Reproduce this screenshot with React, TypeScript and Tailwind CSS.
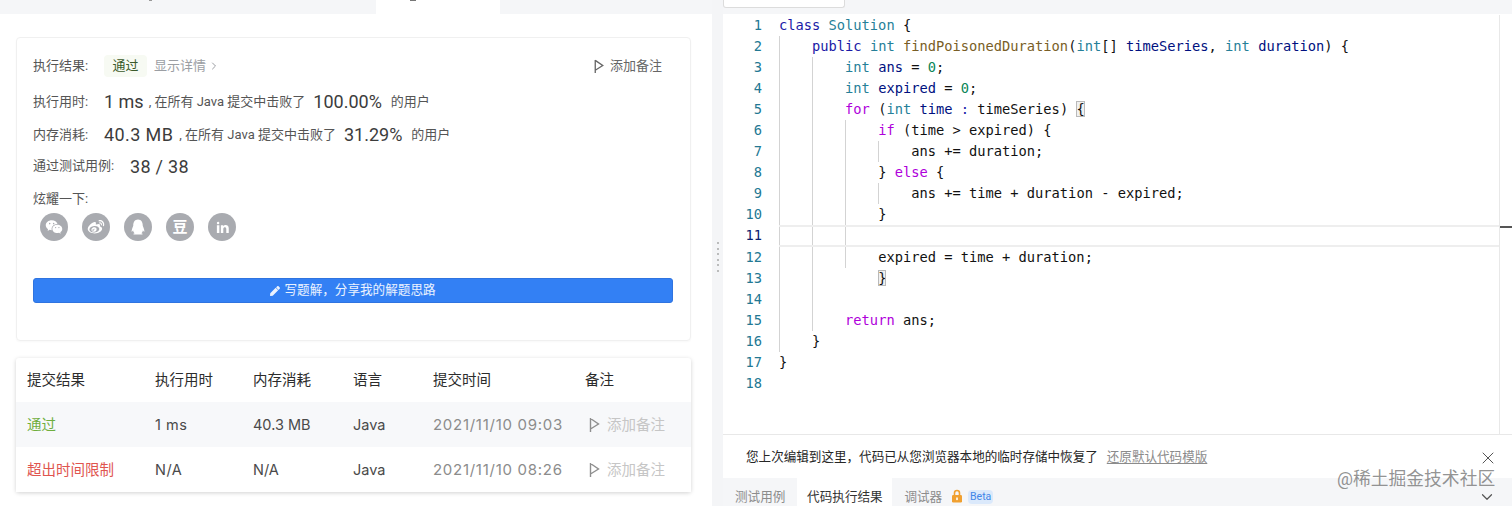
import { RiWechatFill, RiWeiboFill, RiQqFill, RiLinkedinFill } from 'react-icons/ri';
import { FaPen } from 'react-icons/fa';
import { X, ChevronDown, ChevronRight } from 'lucide-react';

const cjk = "font-['Roboto','Noto_Sans_CJK_SC',sans-serif]";

function Flag({ className }: { className: string }) {
    return (
        <svg viewBox="0 0 10 16" className={className} fill="none" stroke="currentColor" strokeWidth="1.4">
            <path d="M1 1v14M1 1.5l8 5.5-8 5" />
        </svg>
    );
}

const kw = 'text-[#1a1aa6]';
const type = 'text-[#267f99]';
const fn = 'text-[#795e26]';
const param = 'text-[#001080]';
const num = 'text-[#098658]';
const ctrl = 'text-[#af00db]';
const txt = 'text-[#111]';

type Tok = [string, string] | [string, string, boolean];

const lines: { depth: number; toks: Tok[] }[] = [
    { depth: 0, toks: [['class ', kw], ['Solution', type], [' {', txt]] },
    { depth: 1, toks: [['public ', kw], ['int ', type], ['findPoisonedDuration', fn], ['(', txt], ['int', type], ['[] ', txt], ['timeSeries', param], [', ', txt], ['int ', type], ['duration', param], [') {', txt]] },
    { depth: 2, toks: [['int ', type], ['ans', param], [' = ', txt], ['0', num], [';', txt]] },
    { depth: 2, toks: [['int ', type], ['expired', param], [' = ', txt], ['0', num], [';', txt]] },
    { depth: 2, toks: [['for', ctrl], [' (', txt], ['int ', type], ['time', param], [' : ', kw], ['timeSeries) ', txt], ['{', txt, true]] },
    { depth: 3, toks: [['if', ctrl], [' (time > expired) {', txt]] },
    { depth: 4, toks: [['ans += duration;', txt]] },
    { depth: 3, toks: [['} ', txt], ['else', ctrl], [' {', txt]] },
    { depth: 4, toks: [['ans += time + duration - expired;', txt]] },
    { depth: 3, toks: [['}', txt]] },
    { depth: 3, toks: [] },
    { depth: 3, toks: [['expired = time + duration;', txt]] },
    { depth: 2, toks: [['    ', txt], ['}', txt, true]] },
    { depth: 2, toks: [] },
    { depth: 2, toks: [['return', ctrl], [' ans;', txt]] },
    { depth: 1, toks: [['}', txt]] },
    { depth: 0, toks: [['}', txt]] },
    { depth: 0, toks: [] },
];

function CodeLine({ n, depth, toks }: { n: number; depth: number; toks: Tok[] }) {
    const current = n === 11;
    return (
        <div className="flex h-[21.06px] leading-[21.06px]">
            <div className={`w-[39px] shrink-0 text-right ${current ? 'text-[#0b216f]' : 'text-[#237893]'}`}>{n}</div>
            <div className={`ml-[17px] flex flex-1 whitespace-pre ${current ? 'border-y-2 border-[#eeeeee]' : ''}`}>
                {Array.from({ length: depth }).map((_, i) => (
                    <span key={i} className="w-[33.05px] shrink-0 border-l border-[#d3d3d3]" />
                ))}
                <span>
                    {toks.map((t, i) => (
                        <span key={i} className={`${t[1]} ${t[2] ? 'bg-[#f0f0f0] outline outline-1 -outline-offset-1 outline-[#b9b9b9]' : ''}`}>{t[0]}</span>
                    ))}
                </span>
            </div>
        </div>
    );
}

function ShareIcon({ children }: { children: React.ReactNode }) {
    return (
        <span className="flex h-[28px] w-[28px] items-center justify-center rounded-full bg-[#a9abb0] text-[18px] text-white">
            {children}
        </span>
    );
}

function StatLine({ label, value, pct, valueClass }: { label: string; value: string; pct: string; valueClass: string }) {
    return (
        <div className="flex items-center text-[13px] text-[#555]">
            <span className="w-[71px]">{label}</span>
            <span className={`text-[18px] text-[#3c3c3c] ${valueClass}`}>{value}</span>
            <span className="ml-[6px]">, 在所有 Java 提交中击败了</span>
            <span className="ml-[8px] text-[18px] text-[#3c3c3c]">{pct}</span>
            <span className="ml-[9px]">的用户</span>
        </div>
    );
}

const rows = [
    { status: '通过', color: 'text-[#6fae3d]', time: '1 ms', mem: '40.3 MB', at: '2021/11/10 09:03', bg: 'bg-[#f7f8fa]' },
    { status: '超出时间限制', color: 'text-[#e0554f]', time: 'N/A', mem: 'N/A', at: '2021/11/10 08:26', bg: 'bg-white' },
];

export default function App() {
    return (
        <div className={`flex h-[506px] w-[1512px] overflow-hidden bg-[#f4f5f7] ${cjk}`}>
            {/* left: submission result */}
            <div className="flex w-[712px] shrink-0 flex-col">
                <div className="relative flex h-[14px] shrink-0 justify-start bg-[#f5f6f8]">
                    <div className="ml-[376px] h-full w-[124px] bg-white" />
                    {/* bottoms of the tab icons that are cut off by the crop */}
                    <span className="absolute left-[149px] top-0 h-[1px] w-[3px] bg-[#999]" />
                    <span className="absolute left-[410px] top-0 h-[1px] w-[6px] bg-[#777]" />
                </div>
                <div className="flex-1 bg-white px-[16px] pt-[23px]">
                    <div className="flex h-[304px] w-[675px] flex-col rounded-[4px] border border-[#f0f0f0] px-[16px] shadow-[0_1px_2px_rgba(0,0,0,0.03)]">
                        <div className="mt-[17px] flex h-[22px] items-center text-[13px] text-[#555]">
                            <span className="w-[71px]">执行结果:</span>
                            <span className="flex h-[22px] w-[43px] items-center justify-center rounded-[4px] bg-[#f7faf3] text-[#3b5a2a]">通过</span>
                            <span className="ml-[7px] flex items-center text-[#9b9ea3]">显示详情<ChevronRight size={12} className="ml-[2px]" /></span>
                            <span className="ml-auto mr-[12px] flex items-center gap-[6px] text-[#666]">
                                <Flag className="h-[15px] w-[10px]" />添加备注
                            </span>
                        </div>
                        <div className="mt-[11px] h-[22px]"><StatLine label="执行用时:" value="1 ms" pct="100.00%" valueClass="-mr-[1px]" /></div>
                        <div className="mt-[11px] h-[22px]"><StatLine label="内存消耗:" value="40.3 MB" pct="31.29%" valueClass="tracking-[0.4px]" /></div>
                        <div className="mt-[12px] flex h-[22px] items-center text-[13px] text-[#555]">
                            <span className="w-[97px]">通过测试用例:</span>
                            <span className="whitespace-pre text-[18px] tracking-[0.3px] text-[#3c3c3c]">38 / 38</span>
                        </div>
                        <div className="mt-[13px] h-[18px] text-[13px] leading-[18px] text-[#555]">炫耀一下:</div>
                        <div className="ml-[7px] mt-[5px] flex gap-[14px]">
                            <ShareIcon><RiWechatFill /></ShareIcon>
                            <ShareIcon><RiWeiboFill /></ShareIcon>
                            <ShareIcon><RiQqFill /></ShareIcon>
                            <ShareIcon><span className="text-[15px] font-bold leading-none">豆</span></ShareIcon>
                            <ShareIcon><RiLinkedinFill className="text-[15px]" /></ShareIcon>
                        </div>
                        <button className="mt-[37px] flex h-[25px] w-[640px] items-center justify-center gap-[4px] rounded-[3px] border border-[#2f74e0] bg-[#3380f4] text-[12.6px] text-white/90">
                            <FaPen className="text-[10px]" />写题解，分享我的解题思路
                        </button>
                    </div>
                    <div className="mt-[17px] w-[675px] rounded-[3px] bg-white font-['Inter','Noto_Sans_CJK_SC',sans-serif] shadow-[0_1px_4px_rgba(0,0,0,0.18)]">
                        <div className="flex h-[44px] items-center pb-[1px] text-[14.5px] text-[#2c2c2c]">
                            <span className="w-[139px] pl-[11px]">提交结果</span>
                            <span className="w-[98px]">执行用时</span>
                            <span className="w-[100px]">内存消耗</span>
                            <span className="w-[80px]">语言</span>
                            <span className="w-[152px]">提交时间</span>
                            <span>备注</span>
                        </div>
                        {rows.map((r) => (
                            <div key={r.at} className={`flex h-[45px] items-center pt-[1px] text-[14.5px] text-[#4a4a4a] ${r.bg}`}>
                                <span className={`w-[139px] pl-[11px] ${r.color}`}>{r.status}</span>
                                <span className="w-[98px] tracking-[0.5px]">{r.time}</span>
                                <span className="w-[100px]">{r.mem}</span>
                                <span className="w-[80px]">Java</span>
                                <span className="w-[156px] text-[15px] tracking-[0.72px] text-[#8c8c8c]">{r.at}</span>
                                <span className="flex items-center gap-[7px] text-[#c6c6c6]">
                                    <Flag className="h-[16px] w-[11px] text-[#8f8f8f]" />添加备注
                                </span>
                            </div>
                        ))}
                    </div>
                </div>
            </div>

            {/* splitter */}
            <div className="flex w-[11px] shrink-0 flex-col items-center justify-center gap-[3.5px] bg-[#f4f5f7] pt-[8px]">
                {[0, 1, 2, 3, 4, 5].map((i) => (
                    <span key={i} className="h-[2px] w-[2px] rounded-full bg-[#a8a8a8]" />
                ))}
            </div>

            {/* right: editor */}
            <div className="flex min-w-0 flex-1 flex-col">
                <div className="h-[14px] shrink-0 bg-[#f5f6f8]">
                    <div className="h-[8px] w-[122px] rounded-b-[3px] border border-t-0 border-[#dcdcdc] bg-white" />
                </div>
                <div className="relative h-[421px] shrink-0 border-b border-[#e8e8e8] bg-white pt-[1px] font-['DejaVu_Sans_Mono',monospace] text-[13.72px]">
                    <div className="mr-[12px] h-full border-r border-[#e8e8e8]">
                        {lines.map((l, i) => (
                            <CodeLine key={i} n={i + 1} depth={l.depth} toks={l.toks} />
                        ))}
                    </div>
                    {/* overview ruler tick */}
                    <span className="absolute right-0 top-[212px] h-[2px] w-[12px] bg-[#555]" />
                </div>
                <div className="flex h-[43px] shrink-0 items-center bg-white pl-[23px] pr-[17px] pt-[2px] text-[12.57px] text-[#262626]">
                    <span>您上次编辑到这里，代码已从您浏览器本地的临时存储中恢复了</span>
                    <span className="ml-[9px] text-[#8b8b8b] underline underline-offset-2">还原默认代码模版</span>
                    <X size={20} strokeWidth={1.2} className="ml-auto -mr-[3px] text-[#555]" />
                </div>
                <div className="relative flex h-[28px] shrink-0 bg-[#f5f6f8] pl-[12px] pr-[17px] text-[12.6px] leading-[18px] text-[#8c8c8c]">
                    <span className="pt-[10px]">测试用例</span>
                    <span className="ml-[12px] h-full w-[95px] bg-white pt-[10px] text-center text-[#333]">代码执行结果</span>
                    <span className="ml-[12px] pt-[10px]">调试器</span>
                    <svg viewBox="0 0 12 14" className="ml-[9px] mt-[11px] h-[14px] w-[12px] text-[#f0a030]" fill="currentColor">
                        <path d="M3.5 6V4a2.5 2.5 0 0 1 5 0v2" fill="none" stroke="currentColor" strokeWidth="1.6" />
                        <rect x="1" y="6" width="10" height="7.5" rx="1.2" />
                        <rect x="5.2" y="8.5" width="1.6" height="2.6" fill="#fff" />
                    </svg>
                    <span className="ml-[5px] mt-[12px] h-[14px] w-[25px] rounded-[4px] bg-[#dbe9fb] text-center text-[10.5px] leading-[14px] text-[#3f86e8]">Beta</span>
                    <ChevronDown size={18} strokeWidth={1.6} className="ml-auto -mr-[1px] mt-[10px] text-[#555]" />
                    {/* site watermark */}
                    <span className="absolute left-[614px] top-[-11px] text-[17.8px] leading-[24px] text-[#777]/80">@稀土掘金技术社区</span>
                </div>
            </div>
        </div>
    );
}
